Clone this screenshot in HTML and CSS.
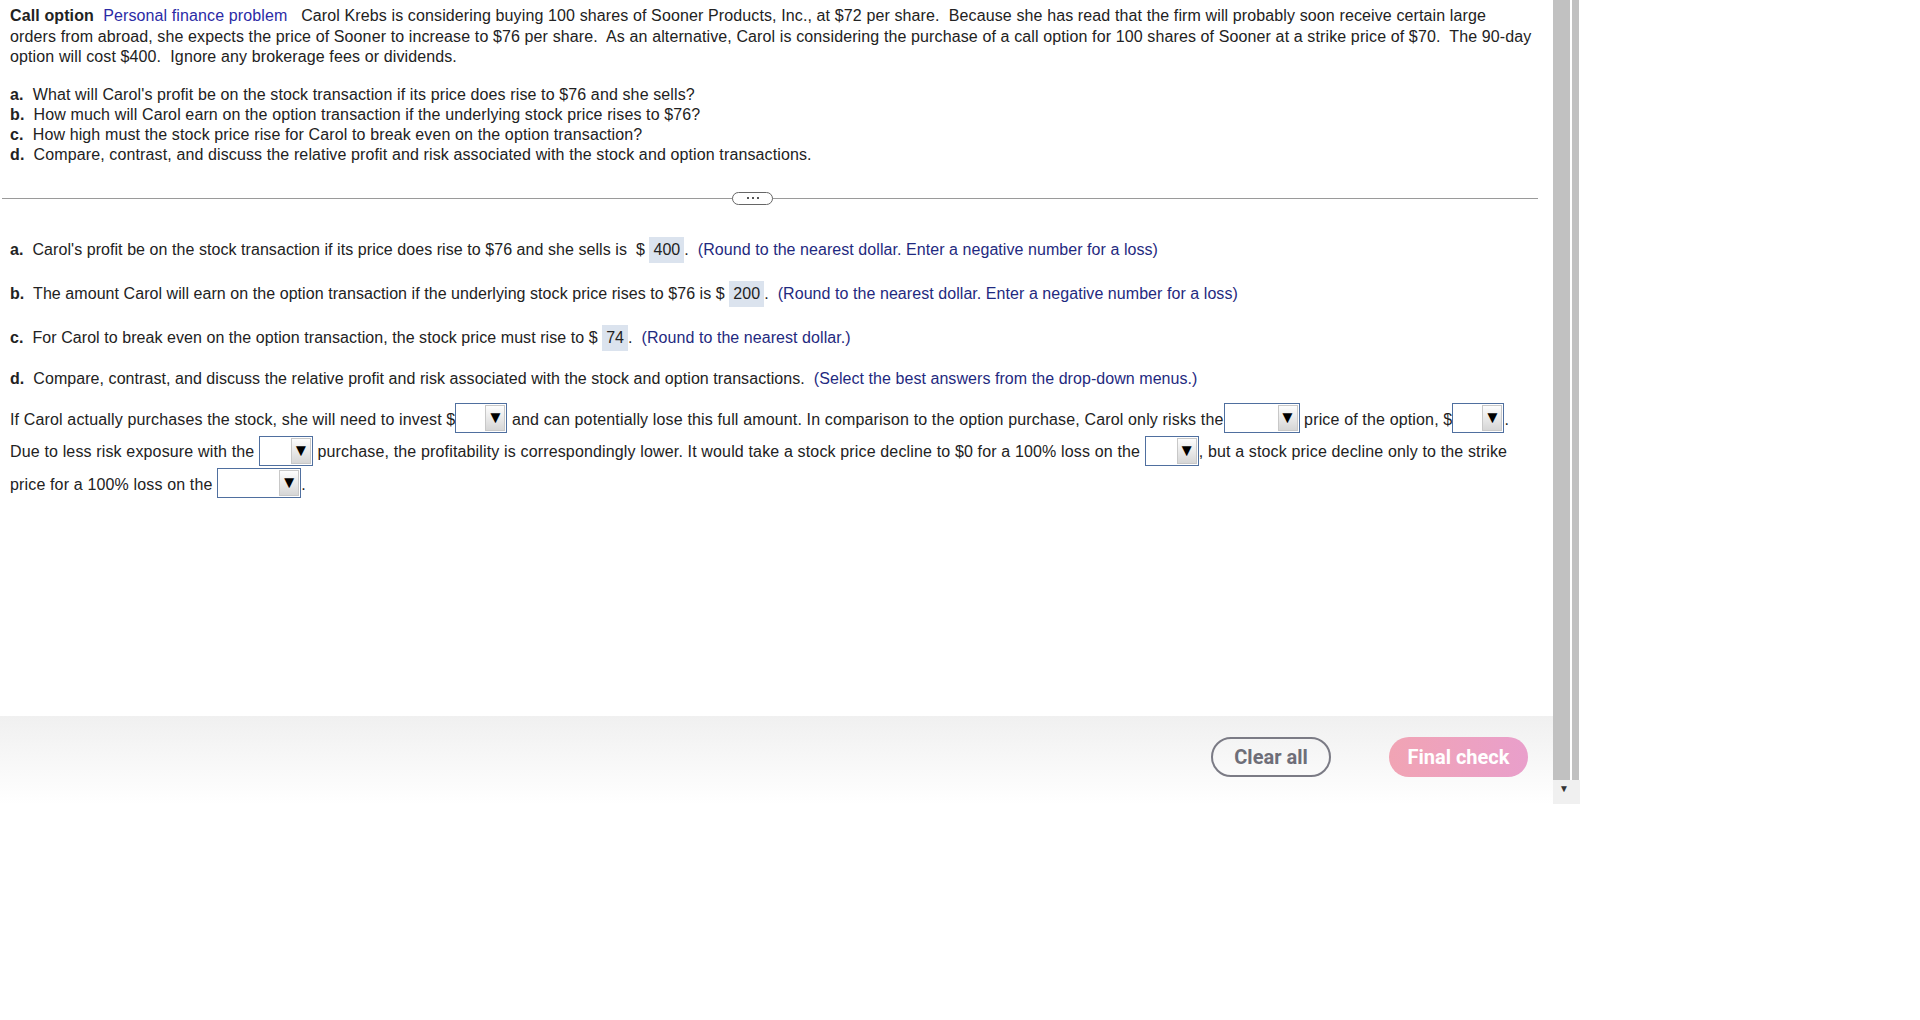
FILE: index.html
```html
<!DOCTYPE html>
<html lang="en">
<head>
    <meta charset="UTF-8">
    <title>Call option</title>
    <link rel="stylesheet" href="styles.css">
</head>
<body>
    <div class="frame">
        <div class="pane">
            <div class="question">
                <p class="problem">
                    <b>Call option</b>&nbsp; <span class="topic">Personal finance problem</span>&nbsp;&nbsp; Carol Krebs is considering buying 100 shares of Sooner Products, Inc., at $72 per share.&nbsp; Because she has read that the firm will probably soon receive certain large<br>
                    orders from abroad, she expects the price of Sooner to increase to $76 per share.&nbsp; As an alternative, Carol is considering the purchase of a call option for 100 shares of Sooner at a strike price of $70.&nbsp; The <span class="nowrap">90-day</span><br>
                    option will cost $400.&nbsp; Ignore any brokerage fees or dividends.
                </p>
                <ul class="parts">
                    <li><b>a.</b>&nbsp; What will Carol's profit be on the stock transaction if its price does rise to $76 and she sells?</li>
                    <li><b>b.</b>&nbsp; How much will Carol earn on the option transaction if the underlying stock price rises to $76?</li>
                    <li><b>c.</b>&nbsp; How high must the stock price rise for Carol to break even on the option transaction?</li>
                    <li><b>d.</b>&nbsp; Compare, contrast, and discuss the relative profit and risk associated with the stock and option transactions.</li>
                </ul>
            </div>

            <div class="divider">
                <span class="more"><i></i><i></i><i></i></span>
            </div>

            <div class="answers">
                <p class="answer"><b>a.</b>&nbsp; Carol's profit be on the stock transaction if its price does rise to $76 and she sells is &nbsp;$ <span class="filled">400</span>.&nbsp; <span class="hint">(Round to the nearest dollar. Enter a negative number for a loss)</span></p>
                <p class="answer"><b>b.</b>&nbsp; The amount Carol will earn on the option transaction if the underlying stock price rises to $76 is $ <span class="filled">200</span>.&nbsp; <span class="hint">(Round to the nearest dollar. Enter a negative number for a loss)</span></p>
                <p class="answer"><b>c.</b>&nbsp; For Carol to break even on the option transaction, the stock price must rise to $ <span class="filled">74</span>.&nbsp; <span class="hint">(Round to the nearest dollar.)</span></p>
                <p class="answer plain"><b>d.</b>&nbsp; Compare, contrast, and discuss the relative profit and risk associated with the stock and option transactions.&nbsp; <span class="hint">(Select the best answers from the drop-down menus.)</span></p>
                <p class="discuss">
                    If Carol actually purchases the stock, she will need to invest $<span class="drop w52"><span class="arrow">&#9660;</span></span> and can potentially lose this full amount. In comparison to the option purchase, Carol only risks the<span class="drop w76"><span class="arrow">&#9660;</span></span> price of the option, $<span class="drop w52"><span class="arrow">&#9660;</span></span>.<br>
                    Due to less risk exposure with the <span class="drop w54"><span class="arrow">&#9660;</span></span> purchase, the profitability is correspondingly lower. It would take a stock price decline to $0 for a 100% loss on the <span class="drop w54"><span class="arrow">&#9660;</span></span>, but a stock price decline only to the strike<br>
                    price for a 100% loss on the <span class="drop w84"><span class="arrow">&#9660;</span></span>.
                </p>
            </div>

            <div class="actions">
                <button class="btn clear">Clear all</button>
                <button class="btn check">Final check</button>
            </div>
        </div>

        <div class="scrollbar">
            <div class="track">
                <div class="thumb"></div>
                <div class="thumb thin"></div>
            </div>
            <div class="down">&#9660;</div>
        </div>
    </div>
</body>
</html>
```

FILE: styles.css
```css
body {
    margin: 0;
    background-color: white;
    font-family: "Liberation Sans", Arial, sans-serif;
    font-size: 16px;
    letter-spacing: 0.12px;
    color: #222;
}

p, ul {
    margin: 0;
}

.nowrap {
    white-space: nowrap;
}

.frame {
    display: flex;
    width: 1580px;
    height: 804px;
}

.pane {
    width: 1553px;
    display: flex;
    flex-direction: column;
}

.question {
    padding: 6px 8px 0 10px;
    line-height: 20.5px;
}

.topic {
    color: #2b2ba6;
}

.parts {
    list-style: none;
    padding: 0;
    margin-top: 17px;
}

.parts li {
    line-height: 20.3px;
}

.divider {
    position: relative;
    margin: 32px 15px 0 2px;
    border-top: 1px solid #9a9a9a;
}

.more {
    position: absolute;
    left: 730px;
    top: -7px;
    width: 39px;
    height: 11px;
    border: 1px solid #666;
    border-radius: 7px;
    background: white;
    display: flex;
    justify-content: center;
    align-items: center;
    gap: 3px;
}

.more i {
    width: 2px;
    height: 2px;
    background: #555;
}

.answers {
    padding: 38px 8px 0 10px;
}

.answer {
    line-height: 26px;
    margin-bottom: 18px;
    letter-spacing: 0.06px;
}

.answer.plain {
    margin-top: -3px;
    margin-bottom: 12px;
}

.filled {
    display: inline-block;
    background-color: #dbe3ee;
    padding: 0 4px;
    line-height: 26px;
}

.hint {
    color: #1f2a80;
}

.discuss {
    line-height: 32.5px;
    letter-spacing: 0.15px;
}

.drop {
    display: inline-flex;
    justify-content: flex-end;
    box-sizing: border-box;
    height: 30px;
    border: 1px solid #4f6f9f;
    background: white;
    vertical-align: middle;
    margin-top: -4px;
}

.w52 { width: 52px; }
.w54 { width: 54px; }
.w76 { width: 76px; }
.w84 { width: 84px; }

.arrow {
    width: 18px;
    margin: 1px 1px 1px 0;
    background: linear-gradient(#fdfdfd, #d6d6d6);
    border: 1px solid #c8c8c8;
    font-size: 17px;
    line-height: 24px;
    text-align: center;
    letter-spacing: 0;
    color: #000;
}

.actions {
    margin-top: auto;
    height: 88px;
    box-sizing: border-box;
    padding: 21px 25px 0 0;
    display: flex;
    justify-content: flex-end;
    align-items: flex-start;
    gap: 58px;
    background: linear-gradient(#f0f0f0, #ffffff);
}

.btn {
    height: 40px;
    border-radius: 20px;
    font-family: Roboto, "Liberation Sans", sans-serif;
    font-size: 20px;
    font-weight: bold;
    letter-spacing: 0;
    cursor: pointer;
}

.clear {
    width: 120px;
    border: 2px solid #7b7b85;
    background: transparent;
    color: #6e6e78;
}

.check {
    width: 139px;
    border: none;
    background: linear-gradient(90deg, #f1a4b4, #e99fcb);
    color: white;
}

.scrollbar {
    width: 27px;
    display: flex;
    flex-direction: column;
}

.track {
    flex: 1;
    display: flex;
    gap: 2px;
}

.thumb {
    width: 17px;
    background: #c1c1c1;
}

.thumb.thin {
    width: 7px;
}

.down {
    height: 24px;
    background: #f0f0f0;
    font-size: 10px;
    color: #333;
    padding-left: 6px;
    line-height: 18px;
}
```
